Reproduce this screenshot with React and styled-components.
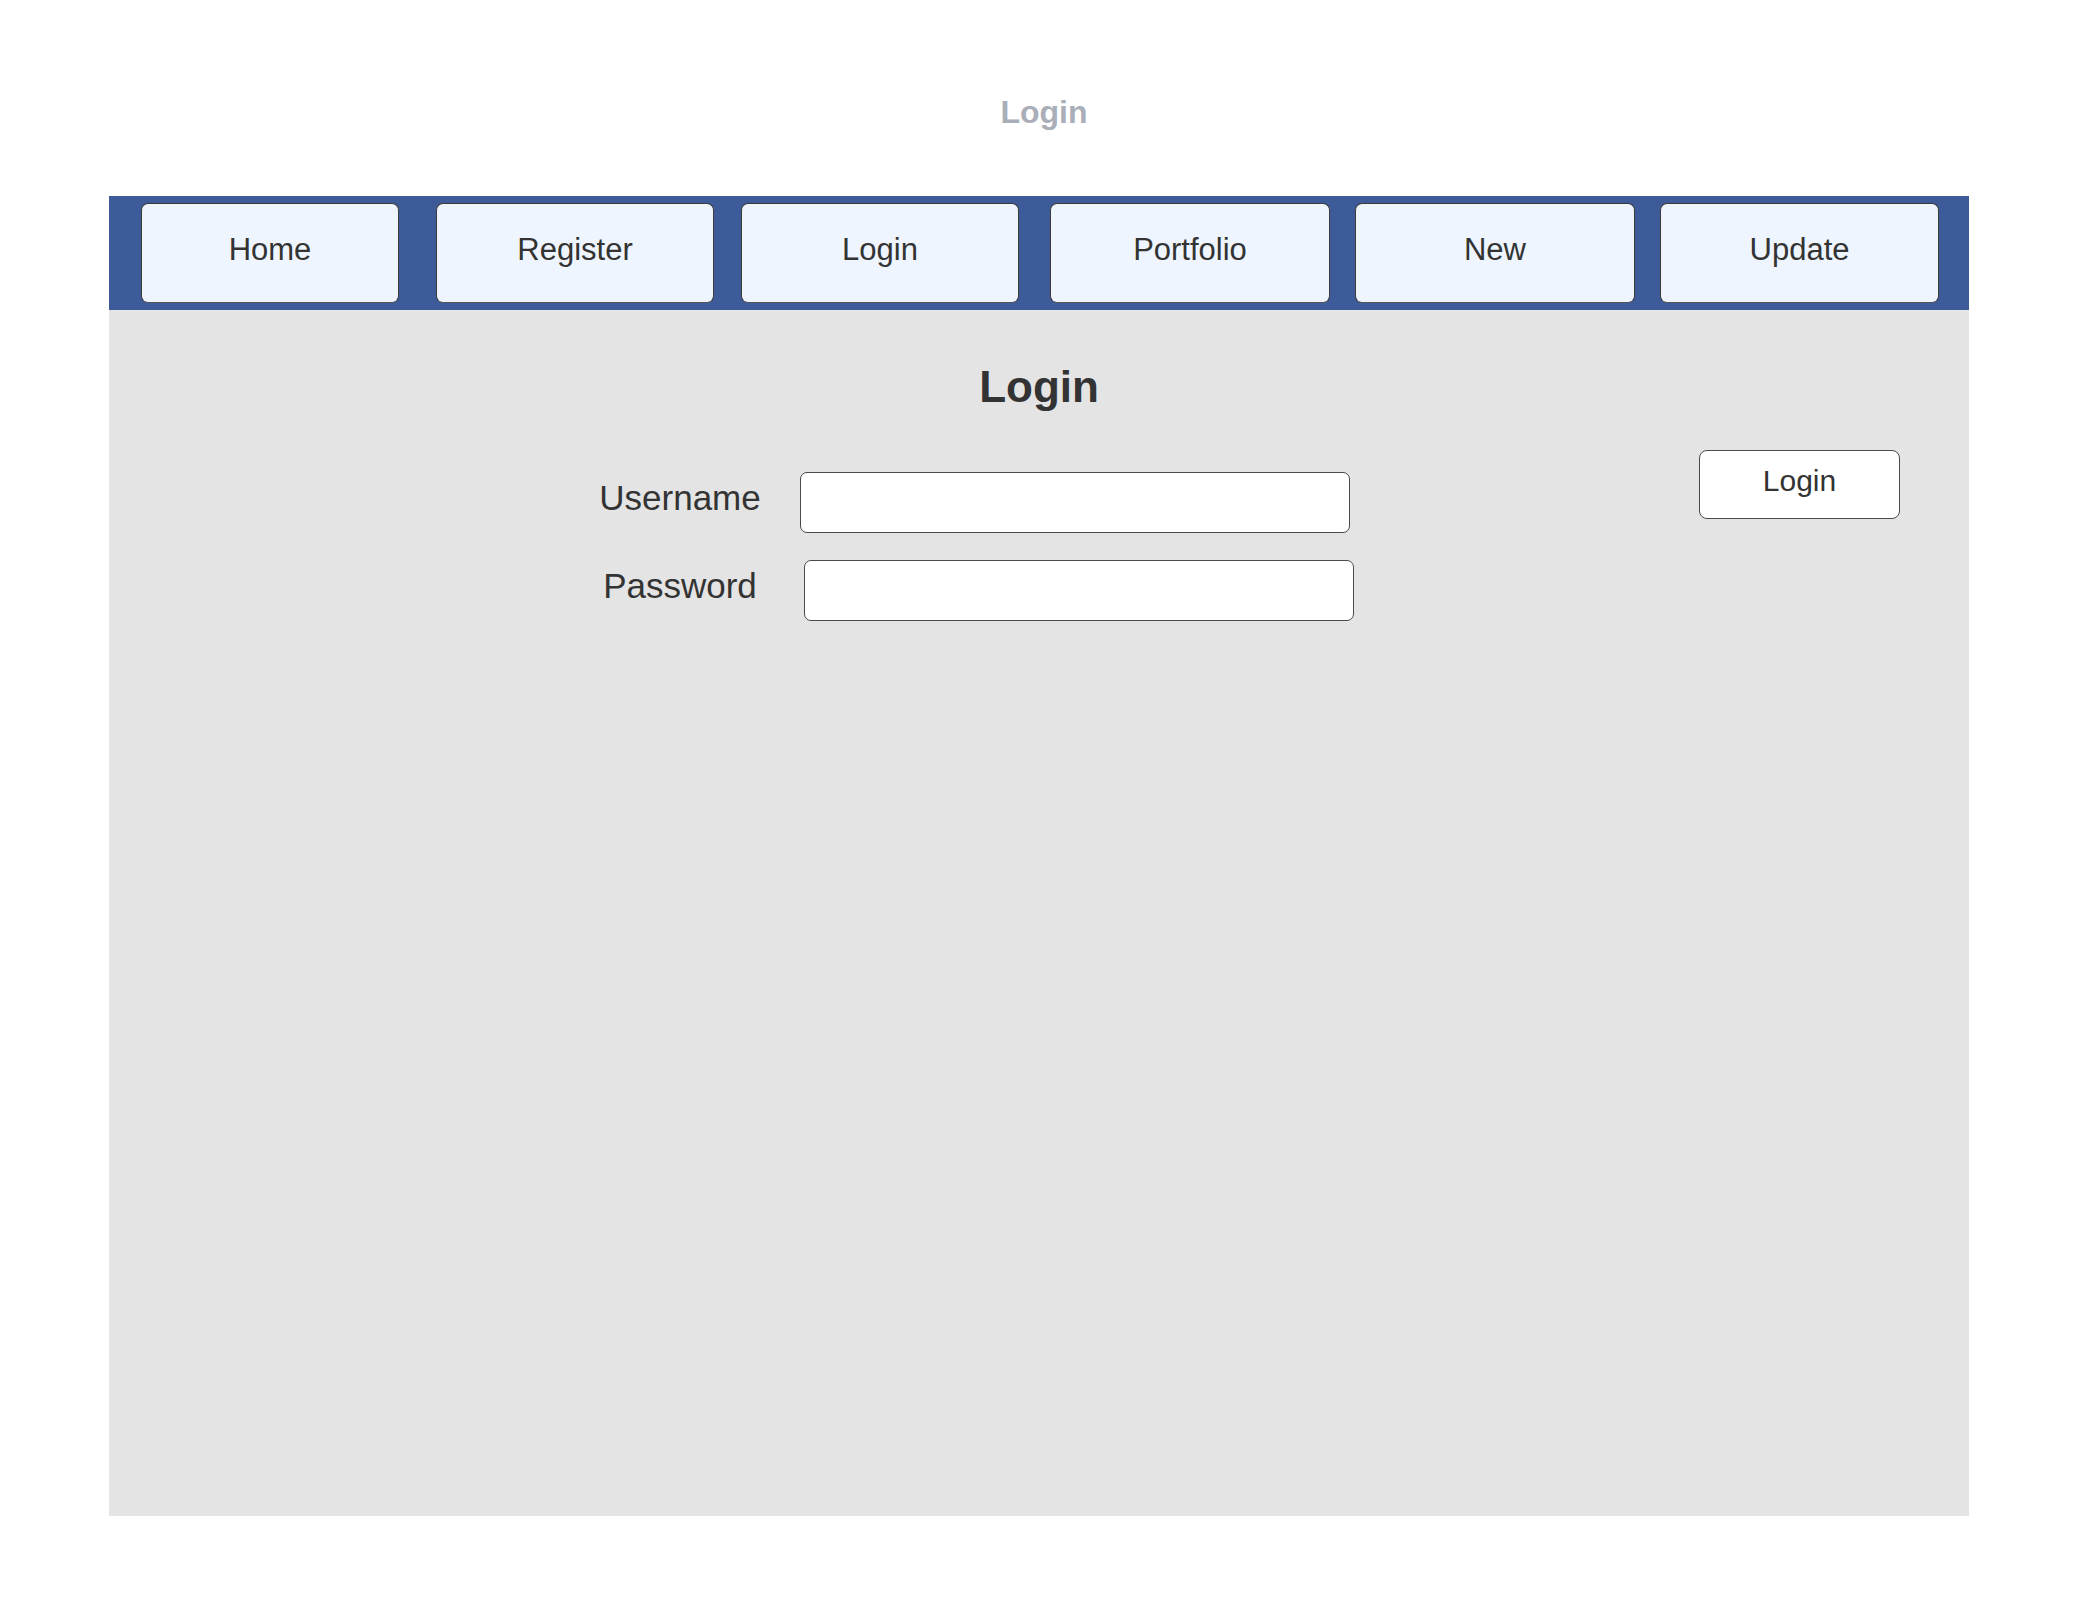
import React from "react";
import styled, { createGlobalStyle } from "styled-components";

const GlobalStyle = createGlobalStyle`
  body {
    margin: 0;
    background: #ffffff;
    font-family: "Liberation Sans", Arial, sans-serif;
    color: #333333;
  }
`;

const Page = styled.div`
  width: 2080px;
  min-height: 1600px;
  padding-top: 94px;
  box-sizing: border-box;
`;

const PageTitle = styled.div`
  text-align: center;
  padding-left: 8px;
  font-size: 32px;
  font-weight: 700;
  color: #a9aeb8;
  margin-bottom: 65px;
`;

const Frame = styled.div`
  width: 1860px;
  margin-left: 109px;
`;

const NavBar = styled.nav`
  display: flex;
  align-items: center;
  height: 114px;
  box-sizing: border-box;
  padding: 7px 30px 7px 32px;
  background: #3d5a99;
`;

const NavButton = styled.div`
  display: flex;
  align-items: center;
  justify-content: center;
  flex: none;
  width: ${(p) => p.$w}px;
  margin-left: ${(p) => p.$gap}px;
  height: 100px;
  box-sizing: border-box;
  padding-bottom: 6px;
  background: #eef5fe;
  border: 1px solid #3a3a3a;
  border-bottom-color: #555;
  border-radius: 7px;
  font-size: 31px;
  color: #333333;
`;

const Content = styled.main`
  height: 1206px;
  background: #e4e4e4;
  padding-top: 52px;
  box-sizing: border-box;
`;

const Heading = styled.h1`
  margin: 0 0 38px;
  text-align: center;
  font-size: 44px;
  font-weight: 700;
  color: #333333;
`;

const Body = styled.div`
  display: flex;
  align-items: flex-start;
  padding: 0 69px 0 451px;
`;

const Form = styled.div`
  display: flex;
  flex-direction: column;
  gap: 27px;
  margin-top: 22px;
`;

const FieldRow = styled.div`
  display: flex;
  align-items: center;
`;

const Label = styled.label`
  width: 240px;
  padding-bottom: 10px;
  text-align: center;
  font-size: 35px;
  color: #333333;
`;

const Input = styled.input`
  width: 550px;
  height: 61px;
  box-sizing: border-box;
  margin: 0 0 0 ${(p) => p.$nudge || 0}px;
  background: #ffffff;
  border: 1px solid #4a4a4a;
  border-radius: 7px;
  font-family: inherit;
  font-size: 28px;
  padding: 0 12px;
  outline: none;
`;

const SubmitButton = styled.button`
  margin-left: auto;
  width: 201px;
  height: 69px;
  box-sizing: border-box;
  padding: 0 0 8px;
  background: #ffffff;
  border: 1px solid #4a4a4a;
  border-radius: 8px;
  font-family: inherit;
  font-size: 30px;
  color: #333333;
  cursor: pointer;
`;

const navItems = [
  { label: "Home", w: 258, gap: 0 },
  { label: "Register", w: 278, gap: 37 },
  { label: "Login", w: 278, gap: 27 },
  { label: "Portfolio", w: 280, gap: 31 },
  { label: "New", w: 280, gap: 25 },
  { label: "Update", w: 279, gap: 25 },
];

function App() {
  return (
    <Page>
      <GlobalStyle />
      <PageTitle>Login</PageTitle>
      <Frame>
        <NavBar>
          {navItems.map((item) => (
            <NavButton key={item.label} $w={item.w} $gap={item.gap}>
              {item.label}
            </NavButton>
          ))}
        </NavBar>
        <Content>
          <Heading>Login</Heading>
          <Body>
            <Form>
              <FieldRow>
                <Label htmlFor="username">Username</Label>
                <Input id="username" type="text" />
              </FieldRow>
              <FieldRow>
                <Label htmlFor="password">Password</Label>
                <Input id="password" type="password" $nudge={4} />
              </FieldRow>
            </Form>
            <SubmitButton>Login</SubmitButton>
          </Body>
        </Content>
      </Frame>
    </Page>
  );
}

export default App;
